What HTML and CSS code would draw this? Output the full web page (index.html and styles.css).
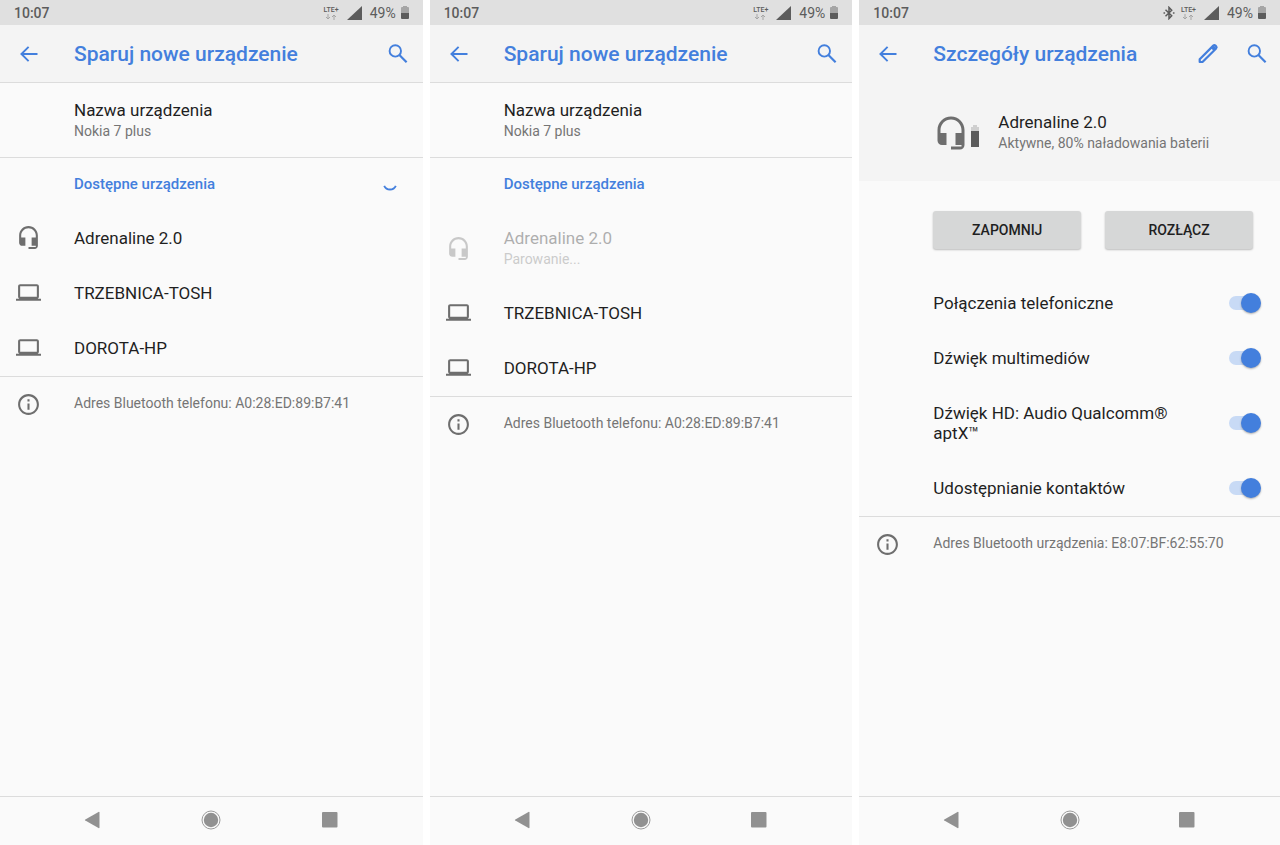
FILE: index.html
```html
<!DOCTYPE html>
<html lang="pl">
<head>
    <meta charset="UTF-8">
    <meta name="viewport" content="width=device-width, initial-scale=1.0">
    <title>Sparuj nowe urządzenie</title>
    <link rel="stylesheet" href="styles.css">
</head>
<body>
    <svg class="sprite" aria-hidden="true">
        <symbol id="back" viewBox="0 0 24 24"><path d="M20.5 12H4.6M11.6 4.8L4.4 12l7.2 7.2" fill="none" stroke="currentColor" stroke-width="1.9"/></symbol>
        <symbol id="search" viewBox="0 0 24 24"><circle cx="9.3" cy="8.9" r="5.7" fill="none" stroke="currentColor" stroke-width="1.9"/><path d="M13.4 13l7.2 7.2" stroke="currentColor" stroke-width="2.2"/></symbol>
        <symbol id="edit" viewBox="0 0 24 24"><path d="M3.7 20v-2.8L17.3 3.600a1.500 1.500 0 0 1 2.100 0l.7.7a1.500 1.500 0 0 1 0 2.100L6.500 20z" fill="none" stroke="currentColor" stroke-width="2.200" stroke-linejoin="round"/><path d="M14.800 6l3 3 2.700-2.700-3-3z" fill="currentColor"/></symbol>
        <symbol id="headset" viewBox="0 0 24 24"><path d="M12 1c-4.970 0-9 4.030-9 9v7c0 1.660 1.340 3 3 3h3v-8H5v-2c0-3.870 3.130-7 7-7s7 3.130 7 7v2h-4v8h4v1h-7v2h6c1.660 0 3-1.340 3-3V10c0-4.970-4.030-9-9-9z" fill="currentColor"/></symbol>
        <symbol id="laptop" viewBox="0 0 24 24"><path d="M20 18c1.100 0 2-.9 2-2V6c0-1.100-.9-2-2-2H4c-1.100 0-2 .9-2 2v10c0 1.100.9 2 2 2H0v2h24v-2h-4zM4 6h16v10H4V6z" fill="currentColor"/></symbol>
        <symbol id="info" viewBox="0 0 24 24"><path d="M11 7h2v2h-2zm0 4h2v6h-2zm1-9C6.480 2 2 6.480 2 12s4.480 10 10 10 10-4.480 10-10S17.520 2 12 2zm0 18c-4.410 0-8-3.590-8-8s3.590-8 8-8 8 3.590 8 8-3.590 8-8 8z" fill="currentColor"/></symbol>
        <symbol id="bluetooth" viewBox="0 0 12 14"><path d="M2.500 3.800l6.200 6L6 12.600V1.400l2.700 2.800-6.200 6" fill="none" stroke="currentColor" stroke-width="1.500"/><path d="M.5 6.200h1.600v1.600H.5zM9.900 6.200h1.600v1.600H9.900z" fill="currentColor"/></symbol>
        <symbol id="arrows" viewBox="0 0 14 6"><path d="M4 0v5M2 3l2 2 2-2M10 6V1M8 3l2-2 2 2" fill="none" stroke="currentColor"/></symbol>
        <symbol id="signal" viewBox="0 0 15 14"><path d="M15 0v14H0z" fill="currentColor"/></symbol>
        <symbol id="battery" viewBox="0 0 8 14"><path d="M2 0h4v1h1a1 1 0 0 1 1 1v5H0V2a1 1 0 0 1 1-1h1z" fill="#a6a6a6"/><path d="M0 7h8v5a1 1 0 0 1-1 1H1a1 1 0 0 1-1-1z" fill="currentColor"/></symbol>
        <symbol id="nav-back" viewBox="0 0 20 20"><path d="M16.500 2.500v15a.7.7 0 0 1-1 .5L2.300 10.600a.7.7 0 0 1 0-1.200L15.500 2a.7.7 0 0 1 1 .5z" fill="currentColor"/></symbol>
        <symbol id="nav-home" viewBox="0 0 20 20"><circle cx="10" cy="10" r="9" fill="none" stroke="currentColor" stroke-width=".9"/><circle cx="10" cy="10" r="7.200" fill="currentColor"/></symbol>
        <symbol id="nav-recent" viewBox="0 0 20 20"><rect x="2" y="2" width="15.500" height="15.500" rx="1" fill="currentColor"/></symbol>
    </svg>

    <div class="screens">
        <!-- Wyszukiwanie urządzeń -->
        <section class="screen">
            <div class="status-bar">
                <span class="time">10:07</span>
                <span class="lte">LTE+<svg><use href="#arrows"/></svg></span>
                <svg class="signal"><use href="#signal"/></svg>
                <span class="percent">49%</span>
                <svg class="battery"><use href="#battery"/></svg>
            </div>
            <header class="app-bar">
                <button type="button" class="icon-btn" aria-label="Wstecz"><svg><use href="#back"/></svg></button>
                <h1>Sparuj nowe urządzenie</h1>
                <button type="button" class="icon-btn" aria-label="Szukaj"><svg><use href="#search"/></svg></button>
            </header>
            <main>
                <button type="button" class="row tall name-row">
                    <span class="row-icon"></span>
                    <span class="row-text">Nazwa urządzenia<small>Nokia 7 plus</small></span>
                </button>
                <div class="category">
                    <h2>Dostępne urządzenia</h2>
                    <svg class="spinner" viewBox="0 0 14 14"><path d="M1.200 8.800a6.400 6.400 0 0 0 11.600 0" fill="none" stroke="currentColor" stroke-width="1.900"/></svg>
                </div>
                <button type="button" class="row">
                    <svg class="row-icon"><use href="#headset"/></svg>
                    <span class="row-text">Adrenaline 2.0</span>
                </button>
                <button type="button" class="row">
                    <svg class="row-icon"><use href="#laptop"/></svg>
                    <span class="row-text">TRZEBNICA-TOSH</span>
                </button>
                <button type="button" class="row">
                    <svg class="row-icon"><use href="#laptop"/></svg>
                    <span class="row-text">DOROTA-HP</span>
                </button>
                <div class="address">
                    <svg class="row-icon"><use href="#info"/></svg>
                    <p>Adres Bluetooth telefonu: A0:28:ED:89:B7:41</p>
                </div>
            </main>
            <nav class="nav-bar">
                <button type="button" aria-label="Wstecz"><svg><use href="#nav-back"/></svg></button>
                <button type="button" aria-label="Ekran główny"><svg><use href="#nav-home"/></svg></button>
                <button type="button" aria-label="Ostatnie"><svg><use href="#nav-recent"/></svg></button>
            </nav>
        </section>

        <!-- Parowanie -->
        <section class="screen">
            <div class="status-bar">
                <span class="time">10:07</span>
                <span class="lte">LTE+<svg><use href="#arrows"/></svg></span>
                <svg class="signal"><use href="#signal"/></svg>
                <span class="percent">49%</span>
                <svg class="battery"><use href="#battery"/></svg>
            </div>
            <header class="app-bar">
                <button type="button" class="icon-btn" aria-label="Wstecz"><svg><use href="#back"/></svg></button>
                <h1>Sparuj nowe urządzenie</h1>
                <button type="button" class="icon-btn" aria-label="Szukaj"><svg><use href="#search"/></svg></button>
            </header>
            <main>
                <button type="button" class="row tall name-row">
                    <span class="row-icon"></span>
                    <span class="row-text">Nazwa urządzenia<small>Nokia 7 plus</small></span>
                </button>
                <div class="category">
                    <h2>Dostępne urządzenia</h2>
                </div>
                <button type="button" class="row tall" disabled>
                    <svg class="row-icon"><use href="#headset"/></svg>
                    <span class="row-text">Adrenaline 2.0<small>Parowanie...</small></span>
                </button>
                <button type="button" class="row">
                    <svg class="row-icon"><use href="#laptop"/></svg>
                    <span class="row-text">TRZEBNICA-TOSH</span>
                </button>
                <button type="button" class="row">
                    <svg class="row-icon"><use href="#laptop"/></svg>
                    <span class="row-text">DOROTA-HP</span>
                </button>
                <div class="address">
                    <svg class="row-icon"><use href="#info"/></svg>
                    <p>Adres Bluetooth telefonu: A0:28:ED:89:B7:41</p>
                </div>
            </main>
            <nav class="nav-bar">
                <button type="button" aria-label="Wstecz"><svg><use href="#nav-back"/></svg></button>
                <button type="button" aria-label="Ekran główny"><svg><use href="#nav-home"/></svg></button>
                <button type="button" aria-label="Ostatnie"><svg><use href="#nav-recent"/></svg></button>
            </nav>
        </section>

        <!-- Szczegóły urządzenia -->
        <section class="screen">
            <div class="status-bar">
                <span class="time">10:07</span>
                <svg class="bluetooth"><use href="#bluetooth"/></svg>
                <span class="lte">LTE+<svg><use href="#arrows"/></svg></span>
                <svg class="signal"><use href="#signal"/></svg>
                <span class="percent">49%</span>
                <svg class="battery"><use href="#battery"/></svg>
            </div>
            <header class="app-bar flat">
                <button type="button" class="icon-btn" aria-label="Wstecz"><svg><use href="#back"/></svg></button>
                <h1>Szczegóły urządzenia</h1>
                <button type="button" class="icon-btn" aria-label="Edytuj"><svg><use href="#edit"/></svg></button>
                <button type="button" class="icon-btn" aria-label="Szukaj"><svg><use href="#search"/></svg></button>
            </header>
            <main>
                <div class="device">
                    <svg class="device-icon"><use href="#headset"/></svg>
                    <svg class="device-battery" viewBox="0 0 8 22"><path d="M2 0h4v2h2v4H0V2h2z" fill="#cfcfcf"/><path d="M0 6h8v16H0z" fill="#5c5c5c"/></svg>
                    <span class="row-text">Adrenaline 2.0<small>Aktywne, 80% naładowania baterii</small></span>
                </div>
                <div class="actions">
                    <button type="button">ZAPOMNIJ</button>
                    <button type="button">ROZŁĄCZ</button>
                </div>
                <label class="row option">
                    <span class="row-text">Połączenia telefoniczne</span>
                    <input type="checkbox" class="switch" checked>
                </label>
                <label class="row option">
                    <span class="row-text">Dźwięk multimediów</span>
                    <input type="checkbox" class="switch" checked>
                </label>
                <label class="row tall option">
                    <span class="row-text">Dźwięk HD: Audio Qualcomm® aptX™</span>
                    <input type="checkbox" class="switch" checked>
                </label>
                <label class="row option">
                    <span class="row-text">Udostępnianie kontaktów</span>
                    <input type="checkbox" class="switch" checked>
                </label>
                <div class="address">
                    <svg class="row-icon"><use href="#info"/></svg>
                    <p>Adres Bluetooth urządzenia: E8:07:BF:62:55:70</p>
                </div>
            </main>
            <nav class="nav-bar">
                <button type="button" aria-label="Wstecz"><svg><use href="#nav-back"/></svg></button>
                <button type="button" aria-label="Ekran główny"><svg><use href="#nav-home"/></svg></button>
                <button type="button" aria-label="Ostatnie"><svg><use href="#nav-recent"/></svg></button>
            </nav>
        </section>
    </div>
</body>
</html>
```

FILE: styles.css
```css
* {
    box-sizing: border-box;
}
body {
    margin: 0;
    background-color: #fff;
    color: #1f1f1f;
    font-family: Roboto, "Noto Sans", sans-serif;
    font-size: 17px;
    line-height: 20px;
}
button {
    margin: 0;
    padding: 0;
    border: none;
    background: none;
    color: inherit;
    font: inherit;
    cursor: pointer;
}
svg {
    display: block;
}
.sprite {
    display: none;
}
.screens {
    display: grid;
    grid-template-columns: 423fr 423fr 421fr;
    gap: 7px;
    min-height: 100vh;
}
.screen {
    display: flex;
    flex-direction: column;
    background-color: #fafafa;
}
.screen main {
    flex: 1;
}

/* status bar */
.status-bar {
    display: flex;
    align-items: center;
    height: 25px;
    padding: 0 14px;
    background-color: #e0e0e0;
    color: #5c5c5c;
    font-size: 14px;
    font-weight: 500;
}
.time {
    margin-right: auto;
}
.lte {
    margin-right: 8px;
    font-size: 7px;
    line-height: 8px;
}
.lte svg {
    width: 14px;
    height: 6px;
    color: #a6a6a6;
}
.bluetooth {
    width: 12px;
    height: 14px;
    margin-right: 6px;
}
.signal {
    width: 15px;
    height: 14px;
    margin-right: 8px;
}
.percent {
    margin-right: 5px;
    font-weight: 400;
}
.battery {
    width: 8px;
    height: 14px;
}

/* app bar */
.app-bar {
    display: flex;
    align-items: center;
    height: 58px;
    padding: 0 13px 0 17px;
    background-color: #f4f4f4;
    border-bottom: 1px solid #dcdcdc;
    color: #437fdd;
}
.app-bar.flat {
    padding-right: 11px;
    border-bottom-color: #f4f4f4;
}
.app-bar h1 {
    flex: 1;
    margin: 0 0 0 33px;
    font-size: 21px;
    font-weight: 500;
    line-height: 24px;
}
.icon-btn svg {
    width: 24px;
    height: 24px;
}
.icon-btn + .icon-btn {
    margin-left: 25px;
}

/* list */
.row {
    display: flex;
    align-items: center;
    width: 100%;
    min-height: 55px;
    padding: 0 19px 2px 16px;
    text-align: left;
}
.row.tall {
    min-height: 75px;
    padding-bottom: 0;
}
.row-icon {
    flex: none;
    width: 25px;
    height: 25px;
    margin-right: 33px;
    color: #6e6e6e;
}
.row-text {
    flex: 1;
}
.row-text small {
    display: block;
    color: #757575;
    font-size: 14px;
    line-height: 22px;
}
.row:disabled {
    opacity: 0.35;
}
.row.name-row {
    padding-top: 2px;
    border-bottom: 1px solid #dcdcdc;
}
.category {
    display: flex;
    align-items: center;
    justify-content: space-between;
    height: 53px;
    padding: 0 26px 2px 74px;
    color: #437fdd;
}
.category h2 {
    margin: 0;
    font-size: 15px;
    font-weight: 500;
}
.spinner {
    width: 14px;
    height: 14px;
}
.address {
    display: flex;
    padding: 15px 16px;
    border-top: 1px solid #dcdcdc;
    color: #757575;
    font-size: 14px;
    line-height: 22px;
}
.address p {
    margin: 0;
}

/* device details */
.device {
    display: flex;
    align-items: center;
    height: 98px;
    padding: 1px 19px 0 74px;
    background-color: #f4f4f4;
}
.device-icon {
    width: 36px;
    height: 36px;
    color: #6e6e6e;
}
.device-battery {
    width: 8px;
    height: 22px;
    margin: 6px 19px 0 2px;
}
.actions {
    display: grid;
    grid-template-columns: 1fr 1fr;
    gap: 24px;
    padding: 30px 27px 27px 74px;
}
.actions button {
    height: 38px;
    border-radius: 3px;
    background-color: #d6d7d7;
    box-shadow: 0 1px 2px rgba(0, 0, 0, 0.25);
    font-size: 14px;
    font-weight: 500;
}
.option,
.row.tall.option {
    padding-bottom: 2px;
    padding-left: 74px;
}
.option .row-text {
    padding-right: 54px;
}
.switch {
    position: relative;
    flex: none;
    width: 32px;
    height: 20px;
    margin: 0;
    appearance: none;
}
.switch::before {
    content: "";
    position: absolute;
    top: 3px;
    left: 0;
    width: 30px;
    height: 14px;
    border-radius: 7px;
    background-color: #c8daf5;
}
.switch::after {
    content: "";
    position: absolute;
    top: 0;
    left: 0;
    width: 20px;
    height: 20px;
    border-radius: 50%;
    background-color: #fafafa;
    box-shadow: 0 1px 2px rgba(0, 0, 0, 0.3);
}
.switch:checked::after {
    left: 12px;
    background-color: #437fdd;
}

/* navigation bar */
.nav-bar {
    display: flex;
    height: 49px;
    padding: 0 34px 2px;
    border-top: 1px solid #dcdcdc;
    color: #919191;
}
.nav-bar button {
    display: flex;
    flex: 1;
    align-items: center;
    justify-content: center;
}
.nav-bar svg {
    width: 20px;
    height: 20px;
}
```
